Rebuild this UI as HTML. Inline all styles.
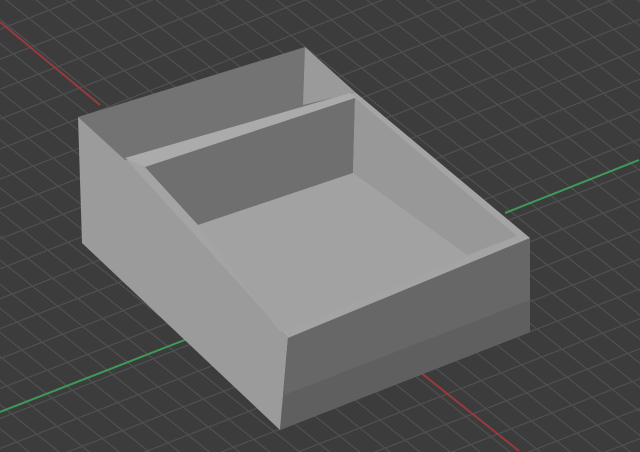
<!DOCTYPE html>
<html><head><style>
html,body{margin:0;padding:0;overflow:hidden;width:640px;height:452px}
body{background-color:#3c3c3c;background-image:
repeating-linear-gradient(158.7deg, transparent 0 26.6px, #4e4e4e 26.6px 27.9px),
repeating-linear-gradient(38.7deg, transparent 0 17.5px, #4e4e4e 17.5px 18.8px);}
svg{display:block;position:absolute;left:0;top:0}
</style></head>
<body>
<svg width="640" height="452" viewBox="0 0 640 452" xmlns="http://www.w3.org/2000/svg">
<line x1="0" y1="22" x2="100" y2="105" stroke="#9a3a3e" stroke-width="2"/>
<line x1="405" y1="360" x2="519" y2="451" stroke="#9a3a3e" stroke-width="2"/>
<line x1="0" y1="412" x2="200" y2="334" stroke="#3f9a5a" stroke-width="2"/>
<line x1="505" y1="213" x2="639" y2="160" stroke="#3f9a5a" stroke-width="2"/>
<polygon points="78,117 128,160 288,338 280,430 82,243" fill="#9b9b9b"/>
<polygon points="288,338 530,238 530,332 280,430" fill="#676767"/>
<polygon points="284,395 530,300 530,332 280,430" fill="#5f5f5f"/>
<polygon points="125,158 355,92 530,238 288,338" fill="#a4a4a4"/>
<polygon points="78,117 305,47 355,92 125,160" fill="#737373"/>
<polygon points="305,47 355,92 340,96 303,105" fill="#9a9a9a"/>
<polygon points="125,158 350,93 357,98 145,167" fill="#ababab"/>
<polygon points="145,167 355,98 353,173 198,225" fill="#6f6f6f"/>
<polygon points="355,98 517,236 467,255 353,173" fill="#989898"/>
<polygon points="198,225 353,173 467,255 517,236 290,330 280,332" fill="#a2a2a2"/>
</svg>
</body></html>
